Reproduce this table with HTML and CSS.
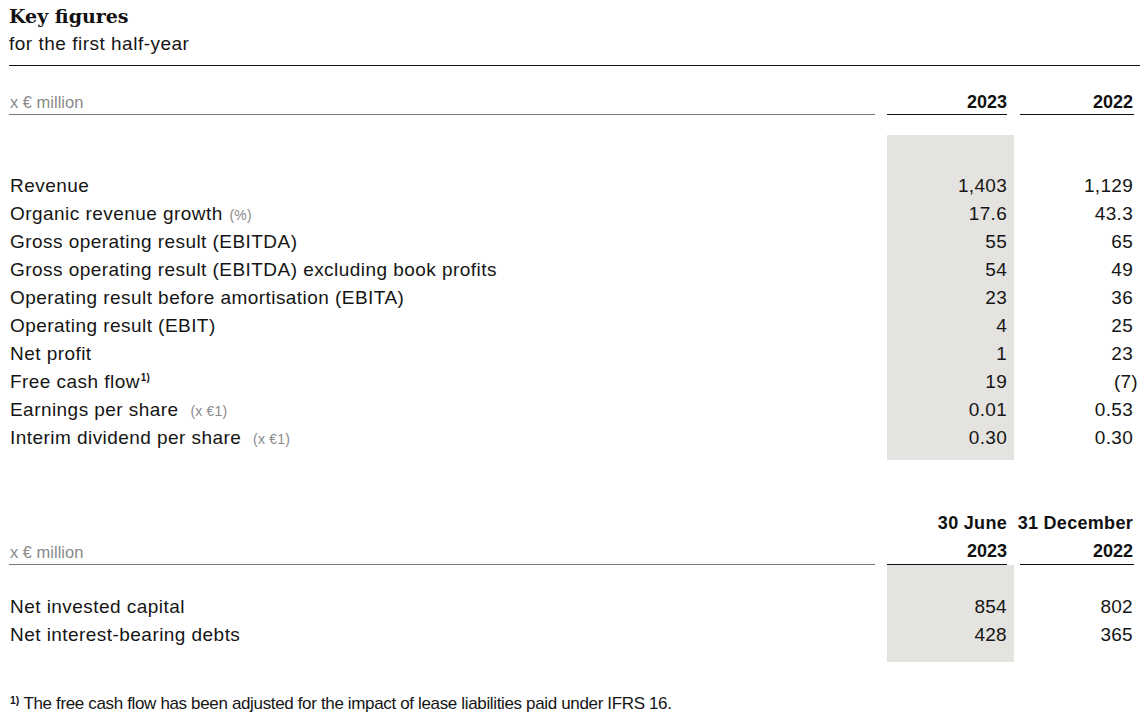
FILE: index.html
```html
<!DOCTYPE html>
<html lang="en">
<head>
<meta charset="utf-8">
<title>Key figures</title>
<link rel="stylesheet" href="styles.css">
</head>
<body>
<div class="page">
  <header class="title-block">
    <h1 class="title">Key figures</h1>
    <p class="subtitle">for the first half-year</p>
  </header>

  <section class="table table-1">
    <div class="head">
      <div class="h-label"><span class="unit">x € million</span></div>
      <div class="h-col h-col1"><span class="h-inner">2023</span></div>
      <div class="h-col h-col2"><span class="h-inner">2022</span></div>
    </div>
    <div class="body">
      <div class="spacer"></div><div class="spacer shade"></div><div class="spacer"></div>

      <div class="lbl">Revenue</div><div class="num shade">1,403</div><div class="num n2">1,129</div>
      <div class="lbl">Organic revenue growth <span class="note">(%)</span></div><div class="num shade">17.6</div><div class="num n2">43.3</div>
      <div class="lbl">Gross operating result (EBITDA)</div><div class="num shade">55</div><div class="num n2">65</div>
      <div class="lbl">Gross operating result (EBITDA) excluding book profits</div><div class="num shade">54</div><div class="num n2">49</div>
      <div class="lbl">Operating result before amortisation (EBITA)</div><div class="num shade">23</div><div class="num n2">36</div>
      <div class="lbl">Operating result (EBIT)</div><div class="num shade">4</div><div class="num n2">25</div>
      <div class="lbl">Net profit</div><div class="num shade">1</div><div class="num n2">23</div>
      <div class="lbl">Free cash flow<sup class="fn">1)</sup></div><div class="num shade">19</div><div class="num n2"><span class="neg">(7)</span></div>
      <div class="lbl">Earnings per share <span class="note wide">(x €1)</span></div><div class="num shade">0.01</div><div class="num n2">0.53</div>
      <div class="lbl">Interim dividend per share <span class="note wide">(x €1)</span></div><div class="num shade">0.30</div><div class="num n2">0.30</div>

      <div class="spacer end"></div><div class="spacer end shade"></div><div class="spacer end"></div>
    </div>
  </section>

  <section class="table table-2">
    <div class="head">
      <div class="h-label"><span class="unit">x € million</span></div>
      <div class="h-col h-col1"><span class="h-top">30 June</span><span class="h-inner">2023</span></div>
      <div class="h-col h-col2"><span class="h-top">31 December</span><span class="h-inner">2022</span></div>
    </div>
    <div class="body">
      <div class="spacer"></div><div class="spacer shade"></div><div class="spacer"></div>

      <div class="lbl">Net invested capital</div><div class="num shade">854</div><div class="num n2">802</div>
      <div class="lbl">Net interest-bearing debts</div><div class="num shade">428</div><div class="num n2">365</div>

      <div class="spacer end"></div><div class="spacer end shade"></div><div class="spacer end"></div>
    </div>
  </section>

  <p class="footnote"><sup class="fn-mark">1)</sup> The free cash flow has been adjusted for the impact of lease liabilities paid under IFRS 16.</p>
</div>
</body>
</html>
```

FILE: styles.css
```css
* { box-sizing: border-box; }

html, body {
  margin: 0;
  padding: 0;
  background: #ffffff;
}

body {
  font-family: "Liberation Sans", Arial, sans-serif;
  color: #151515;
}

.page {
  width: 1140px;
  padding: 4px 0 0 9px;
}

.title-block {
  border-bottom: 1px solid #111111;
  padding-bottom: 9px;
}

.title {
  margin: 0;
  font-family: "DejaVu Serif", "Liberation Serif", serif;
  font-weight: bold;
  font-size: 19px;
  line-height: 24px;
  color: #111111;
}

.subtitle {
  margin: 4px 0 0;
  font-size: 19px;
  line-height: 24px;
  letter-spacing: 0.5px;
  color: #151515;
}

/* table layout */
.head,
.body {
  display: grid;
  grid-template-columns: 1fr 127px 126px;
}

.table-1 { margin-top: 24px; }
.table-2 { margin-top: 49px; }

.h-label {
  display: flex;
  align-items: flex-end;
  margin-right: 12px;
  border-bottom: 1px solid #7a7a7a;
}

.unit {
  font-size: 16.5px;
  line-height: 24px;
  color: #8a8a8a;
  padding-left: 1px;
}

.h-col {
  display: flex;
  flex-direction: column;
  align-items: stretch;
  text-align: right;
  font-weight: bold;
  font-size: 18px;
  color: #111111;
}

.h-col1 { padding-right: 7px; }
.h-col2 { padding-left: 6px; padding-right: 6px; }
.h-col2 .h-inner { padding-right: 1px; }

.h-top {
  align-self: flex-end;
  line-height: 29px;
  letter-spacing: 0.3px;
  white-space: nowrap;
}

.h-col2 .h-top { margin-right: 1px; }

.h-inner {
  line-height: 24px;
  border-bottom: 1px solid #111111;
}

.table-2 .h-inner { line-height: 26px; }

.table-1 .body { margin-top: 20px; }

.spacer { height: 37px; }
.spacer.end { height: 8px; }
.table-2 .spacer { height: 28px; }
.table-2 .spacer.end { height: 13px; }

.lbl {
  height: 28px;
  font-size: 19px;
  line-height: 28px;
  letter-spacing: 0.45px;
  padding-left: 1px;
  white-space: nowrap;
}

.note {
  font-size: 14px;
  color: #8a8a8a;
  letter-spacing: 0.2px;
  margin-left: 1px;
}

.note.wide { margin-left: 6px; }

.fn {
  position: relative;
  top: -7px;
  font-size: 10px;
  font-weight: bold;
  vertical-align: baseline;
  line-height: 0;
  letter-spacing: 0;
  margin-left: 1px;
}

.num {
  height: 28px;
  font-size: 19px;
  line-height: 28px;
  letter-spacing: 0.3px;
  text-align: right;
  padding-right: 7px;
}

.num.n2 { padding-right: 7px; }

.neg { margin-right: -5px; }

.shade { background: #e4e3df; }

.footnote {
  margin: 32px 0 0;
  padding-left: 1px;
  font-size: 17px;
  line-height: 20px;
  letter-spacing: -0.35px;
}

.fn-mark {
  position: relative;
  top: -5px;
  font-size: 10.5px;
  font-weight: bold;
  vertical-align: baseline;
  line-height: 0;
  letter-spacing: 0;
}
```
